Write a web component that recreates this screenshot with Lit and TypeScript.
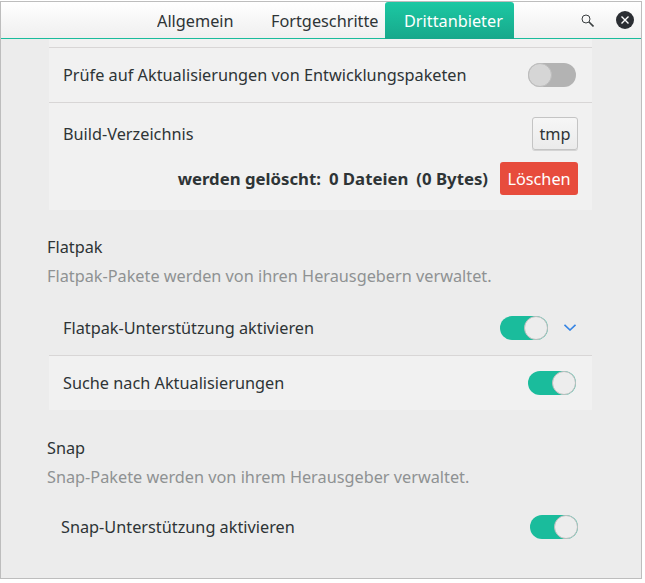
import {LitElement, html, css} from 'lit';
import {customElement} from 'lit/decorators.js';

@customElement('app-root')
export class AppRoot extends LitElement {
	static styles = css`
		:host {
			display: block;
			width: 645px;
			height: 583px;
			background: #fff;
			font-family: "Noto Sans", sans-serif;
			font-size: 16.27px;
			color: #2e3436;
		}
		.window {
			box-sizing: border-box;
			width: 642px;
			height: 578px;
			margin-top: 1px;
			border: 1px solid #bdbdbd;
			background: #ececec;
			overflow: hidden;
		}
		.header {
			display: flex;
			box-sizing: border-box;
			height: 37px;
			border-bottom: 1px solid #1abc9c;
			background: linear-gradient(#ffffff, #efefef);
		}
		.tabs {
			display: flex;
			margin-left: 156px;
			width: 358px;
		}
		.tab {
			line-height: 38px;
			white-space: nowrap;
			overflow: hidden;
		}
		.tab.first {
			width: 114px;
		}
		.tab.second {
			width: 107px;
			margin-right: 7px;
		}
		.tab.active {
			width: 129px;
			box-sizing: border-box;
			height: 37px;
			padding-left: 19px;
			border-radius: 3px 3px 0 0;
			color: #fff;
			background: linear-gradient(#1cc8a3, #17a88b);
		}
		.actions {
			display: flex;
			align-items: center;
			margin-left: 66px;
			gap: 22px;
		}
		.content {
			width: 545px;
			margin-left: 46px;
		}
		.card {
			margin-left: 2px;
			background: #f1f1f1;
		}
		.card.top {
			padding-top: 8px;
		}
		.row {
			display: flex;
			align-items: center;
			justify-content: space-between;
			box-sizing: border-box;
			height: 55px;
			padding: 0 16px 0 14px;
			border-top: 1px solid #d8d6d6;
		}
		.row.plain {
			background: #ececec;
			border-top: none;
		}
		.row.snap {
			height: 51px;
			border-top: none;
			padding: 0 14px;
		}
		.build {
			box-sizing: border-box;
			height: 108px;
			padding: 14px 14px 0;
			border-top: 1px solid #d8d6d6;
		}
		.build-top {
			display: flex;
			align-items: center;
			justify-content: space-between;
		}
		.build-bottom {
			display: flex;
			align-items: center;
			justify-content: flex-end;
			gap: 8px;
			margin-top: 12px;
			font-size: 16.75px;
			font-weight: 700;
		}
		button {
			font: inherit;
			box-sizing: border-box;
			height: 33px;
			padding: 0;
			border-radius: 3px;
		}
		.tmp {
			width: 46px;
			color: #2e3436;
			border: 1px solid #c4c4c4;
			background: linear-gradient(#f6f6f6, #ebebeb);
			box-shadow: 0 1px 0 #d4d4d4;
		}
		.delete {
			width: 78px;
			margin-left: 4px;
			border: none;
			font-size: 16.27px;
			font-weight: 400;
			color: #fff;
			background: #e74c3c;
		}
		.section {
			padding-top: 26px;
		}
		.section + .section {
			padding-top: 27px;
		}
		.section h2 {
			margin: 0;
			font-size: inherit;
			font-weight: 400;
			line-height: 22px;
		}
		.section p {
			margin: 7px 0 13px;
			line-height: 22px;
			color: #8f9293;
		}
		.switch-group {
			display: flex;
			align-items: center;
			gap: 16px;
		}
		.switch {
			position: relative;
			display: block;
			width: 48px;
			height: 24px;
			border-radius: 12px;
			background: #1abc9c;
		}
		.switch::after {
			content: "";
			position: absolute;
			top: 0;
			right: 0;
			box-sizing: border-box;
			width: 24px;
			height: 24px;
			border-radius: 50%;
			border: 1px solid #bdbdbd;
			background: #ededed;
		}
		.switch.off {
			background: #b3b3b3;
		}
		.switch.off::after {
			right: auto;
			left: 0;
			background: #d6d6d6;
		}
		svg {
			display: block;
		}
	`;

	render() {
		return html`
			<div class="window">
				<div class="header">
					<div class="tabs">
						<div class="tab first">Allgemein</div>
						<div class="tab second">Fortgeschrittene</div>
						<div class="tab active">Drittanbieter</div>
					</div>
					<div class="actions">
						<svg width="13" height="13" viewBox="0 0 13 13" fill="none" stroke="#3a3f41">
							<circle cx="5" cy="5" r="4"></circle>
							<path d="M8 8 L12.5 12.5" stroke-width="1.6"></path>
						</svg>
						<svg width="18" height="18" viewBox="0 0 18 18">
							<circle cx="9" cy="9" r="9" fill="#2b2e33"></circle>
							<path d="M5.5 5.5 L12.5 12.5 M12.5 5.5 L5.5 12.5" stroke="#fff" stroke-width="1.4"></path>
						</svg>
					</div>
				</div>
				<div class="content">
					<div class="card top">
						<div class="row">
							<span>Prüfe auf Aktualisierungen von Entwicklungspaketen</span>
							<span class="switch off"></span>
						</div>
						<div class="build">
							<div class="build-top">
								<span>Build-Verzeichnis</span>
								<button class="tmp">tmp</button>
							</div>
							<div class="build-bottom">
								<span>werden gelöscht:</span>
								<span>0 Dateien</span>
								<span>(0 Bytes)</span>
								<button class="delete">Löschen</button>
							</div>
						</div>
					</div>
					<div class="section">
						<h2>Flatpak</h2>
						<p>Flatpak-Pakete werden von ihren Herausgebern verwaltet.</p>
						<div class="card">
							<div class="row plain">
								<span>Flatpak-Unterstützung aktivieren</span>
								<span class="switch-group">
									<span class="switch"></span>
									<svg width="12" height="7" viewBox="0 0 12 7" fill="none" stroke="#3584e4" stroke-width="1.6">
										<path d="M0.5 0.8 L6 6 L11.5 0.8"></path>
									</svg>
								</span>
							</div>
							<div class="row">
								<span>Suche nach Aktualisierungen</span>
								<span class="switch"></span>
							</div>
						</div>
					</div>
					<div class="section">
						<h2>Snap</h2>
						<p>Snap-Pakete werden von ihrem Herausgeber verwaltet.</p>
						<div class="row snap">
							<span>Snap-Unterstützung aktivieren</span>
							<span class="switch"></span>
						</div>
					</div>
				</div>
			</div>
		`;
	}
}
